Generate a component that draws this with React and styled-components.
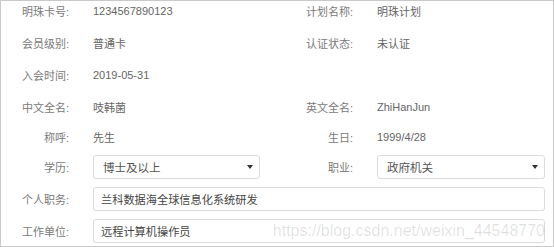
import styled, { createGlobalStyle } from "styled-components";

const GlobalStyle = createGlobalStyle`
  html, body {
    margin: 0;
    padding: 0;
    background: #ffffff;
  }
  body {
    font-family: "Liberation Sans", "Noto Sans CJK SC", sans-serif;
  }
`;

const INFO_ROWS = [
  { left: ["明珠卡号:", "1234567890123"], right: ["计划名称:", "明珠计划"], mt: 0 },
  { left: ["会员级别:", "普通卡"], right: ["认证状态:", "未认证"], mt: 12 },
  { left: ["入会时间:", "2019-05-31"], right: null, mt: 12 },
  { left: ["中文全名:", "吱韩菌"], right: ["英文全名:", "ZhiHanJun"], mt: 12 },
  { left: ["称呼:", "先生"], right: ["生日:", "1999/4/28"], mt: 10 },
];

function Caret() {
  return (
    <svg width="6" height="4" viewBox="0 0 6 4">
      <path d="M0 0 L6 0 L3 4 Z" fill="#333" />
    </svg>
  );
}

export default function App() {
  return (
    <>
      <GlobalStyle />
      <Frame>
        <Form>
          {INFO_ROWS.map((r) => (
            <Row key={r.left[0]} $mt={r.mt} $h={20}>
              <Label>{r.left[0]}</Label>
              <Value>{r.left[1]}</Value>
              {r.right && (
                <>
                  <Label>{r.right[0]}</Label>
                  <Value>{r.right[1]}</Value>
                </>
              )}
            </Row>
          ))}

          <Row $mt={8} $h={24}>
            <Label>学历:</Label>
            <Select>
              <span>博士及以上</span>
              <Caret />
            </Select>
            <Label>职业:</Label>
            <Select>
              <span>政府机关</span>
              <Caret />
            </Select>
          </Row>

          <Row $mt={8} $h={24}>
            <Label>个人职务:</Label>
            <Input readOnly value="兰科数据海全球信息化系统研发" />
          </Row>

          <Row $mt={8} $h={24}>
            <Label>工作单位:</Label>
            <Input readOnly value="远程计算机操作员" />
          </Row>
        </Form>
        <Watermark>https://blog.csdn.net/weixin_44548770</Watermark>
      </Frame>
    </>
  );
}

const Frame = styled.div`
  position: relative;
  box-sizing: border-box;
  width: 554px;
  height: 247px;
  border: 1px solid #c9c9c9;
  overflow: hidden;
  background: #ffffff;
`;

const Form = styled.div`
  display: flex;
  flex-direction: column;
  padding-right: 7px;
`;

const Row = styled.div`
  display: grid;
  grid-template-columns: 68px 167px 69px 168px;
  column-gap: 24px;
  align-items: center;
  height: ${(p) => p.$h}px;
  margin-top: ${(p) => p.$mt}px;
`;

const Label = styled.span`
  text-align: right;
  font-size: 11px;
  color: #7a7a7a;
  white-space: nowrap;
`;

const Value = styled.span`
  font-size: 11px;
  color: #666666;
  white-space: nowrap;
`;

const Select = styled.div`
  box-sizing: border-box;
  height: 24px;
  display: flex;
  align-items: center;
  justify-content: space-between;
  padding: 0 6px 0 9px;
  border: 1px solid #dcdcdc;
  border-radius: 3px;
  font-size: 11.5px;
  color: #555555;
  background: #ffffff;
`;

const Input = styled.input`
  grid-column: 2 / -1;
  box-sizing: border-box;
  width: 100%;
  height: 24px;
  margin: 0;
  padding: 0 7px;
  border: 1px solid #dcdcdc;
  border-radius: 3px;
  outline: none;
  font-family: "Liberation Sans", "Noto Sans CJK SC", sans-serif;
  font-size: 11.2px;
  color: #444444;
  background: transparent;
`;

const Watermark = styled.div`
  position: absolute;
  right: 8px;
  top: 221px;
  line-height: 18px;
  font-size: 16px;
  color: rgba(0, 0, 0, 0.13);
  pointer-events: none;
  white-space: nowrap;
`;
